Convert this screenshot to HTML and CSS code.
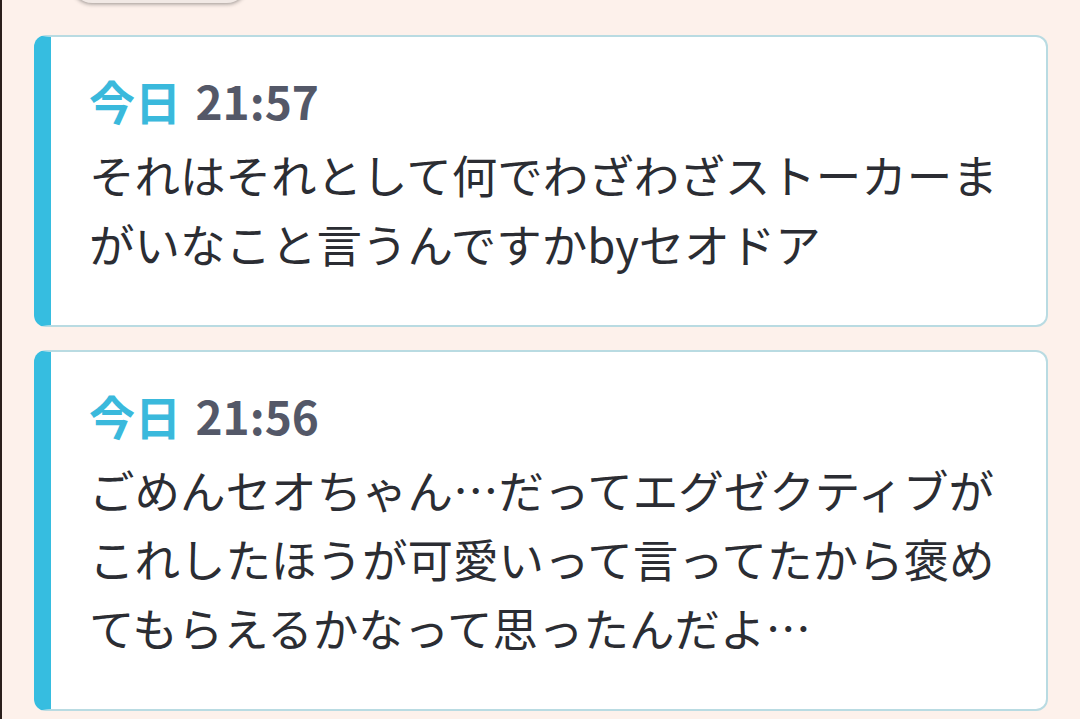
FILE: index.html
```html
<!DOCTYPE html>
<html lang="ja">
<head>
    <meta charset="UTF-8">
    <meta name="viewport" content="width=device-width, initial-scale=1.0">
    <title>メッセージ</title>
    <link rel="stylesheet" href="styles.css">
</head>
<body>

    <div class="list">
        <div class="more-btn"></div>

        <div class="card">
            <div class="card-head"><span class="day">今日</span> <span class="time">21:57</span></div>
            <p class="card-text">それはそれとして何でわざわざストーカーまがいなこと言うんですかbyセオドア</p>
        </div>

        <div class="card">
            <div class="card-head"><span class="day">今日</span> <span class="time">21:56</span></div>
            <p class="card-text">ごめんセオちゃん…だってエグゼクティブがこれしたほうが可愛いって言ってたから褒めてもらえるかなって思ったんだよ…</p>
        </div>
    </div>

</body>
</html>
```

FILE: styles.css
```css
body {
    margin: 0;
    font-family: "Noto Sans CJK JP", "Noto Sans", sans-serif;
    background-color: #fdf1eb;
    border-left: 2px solid #2a1f1c;
    min-height: 719px;
    box-sizing: border-box;
    overflow: hidden;
}

.list {
    padding: 0 32px 0 32px;
}

.more-btn {
    width: 175px;
    height: 40px;
    margin: -37px 0 0 38px;
    background: #f1e9e5;
    border-radius: 20px;
    box-shadow: 0 1px 4px rgba(0, 0, 0, 0.4);
}

.card {
    margin-top: 32px;
    background: #fff;
    border: 2px solid #b9dbe2;
    border-left: 17px solid #36bde0;
    border-radius: 12px;
    padding: 29px 36px 47px 38px;
}

.card + .card {
    margin-top: 23px;
}

.card-head {
    font-size: 46px;
    font-weight: bold;
    line-height: 69px;
}

.day {
    color: #3ab9dc;
    margin-right: 4px;
}

.time {
    color: #545868;
}

.card-text {
    margin: 5px 0 0 0;
    font-size: 45.5px;
    line-height: 69px;
    color: #2b2d33;
}
```
